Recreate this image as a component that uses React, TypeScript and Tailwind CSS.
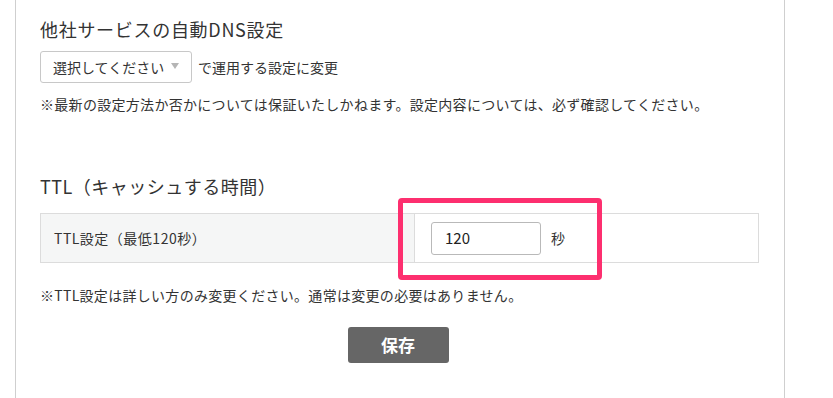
import React from 'react';

const FONT = { fontFamily: '"Noto Sans CJK JP", "Noto Sans", sans-serif' };

export default function App() {
  return (
    <div className="w-[833px] h-[398px] overflow-hidden bg-white text-[#333]" style={FONT}>
      <div className="ml-[15px] w-[770px] h-[398px] border-x border-[#cfcfcf] pl-6 pr-[25px] pt-[16px]">
        {/* 他社サービス */}
        <h2 className="text-[18px] leading-[26px] font-normal tracking-[0.7px]">他社サービスの自動DNS設定</h2>
        <div className="mt-[9px] flex items-center">
          <div className="w-[152px] h-[32px] border border-[#c8c8c8] rounded-[3px] flex items-center pl-[12px] text-[14px] bg-white">
            <span>選択してください</span>
            <span className="ml-[7px] mt-[-2px] w-0 h-0 border-l-[4px] border-r-[4px] border-t-[6px] border-l-transparent border-r-transparent border-t-[#b5b5b5]" />
          </div>
          <span className="ml-[6px] text-[14px]">で運用する設定に変更</span>
        </div>
        <p className="mt-[11px] text-[14px] leading-[20px] tracking-[0.3px]">
          ※最新の設定方法か否かについては保証いたしかねます。設定内容については、必ず確認してください。
        </p>

        {/* TTL */}
        <h2 className="mt-[59px] text-[18px] leading-[26px] font-normal tracking-[0.5px]">TTL（キャッシュする時間）</h2>
        <div className="relative mt-[14px] flex h-[50px] border border-[#dcdcdc]">
          <div className="w-[374px] bg-[#f5f6f6] border-r border-[#dcdcdc] flex items-center pl-[13px] text-[14px] tracking-[0.5px]">
            TTL設定（最低120秒）
          </div>
          <div className="flex-1 flex items-center pl-[16px]">
            <div className="w-[110px] h-[33px] border border-[#b9b9b9] rounded-[3px] flex items-center px-[13px] text-[15px] text-[#222]">
              120
            </div>
            <span className="ml-[10px] text-[14px]">秒</span>
          </div>
          <div className="absolute left-[357px] top-[-16px] w-[204px] h-[82px] border-[5px] border-[#fd2f6f] rounded-[4px] pointer-events-none" />
        </div>
        <p className="mt-[22px] text-[14px] leading-[20px] tracking-[0.3px]">
          ※TTL設定は詳しい方のみ変更ください。通常は変更の必要はありません。
        </p>

        <div className="mt-[22px] flex justify-center pr-[3px]">
          <button className="w-[101px] h-[36px] bg-[#666] rounded-[3px] text-white text-[17px] font-bold">
            保存
          </button>
        </div>
      </div>
    </div>
  );
}
